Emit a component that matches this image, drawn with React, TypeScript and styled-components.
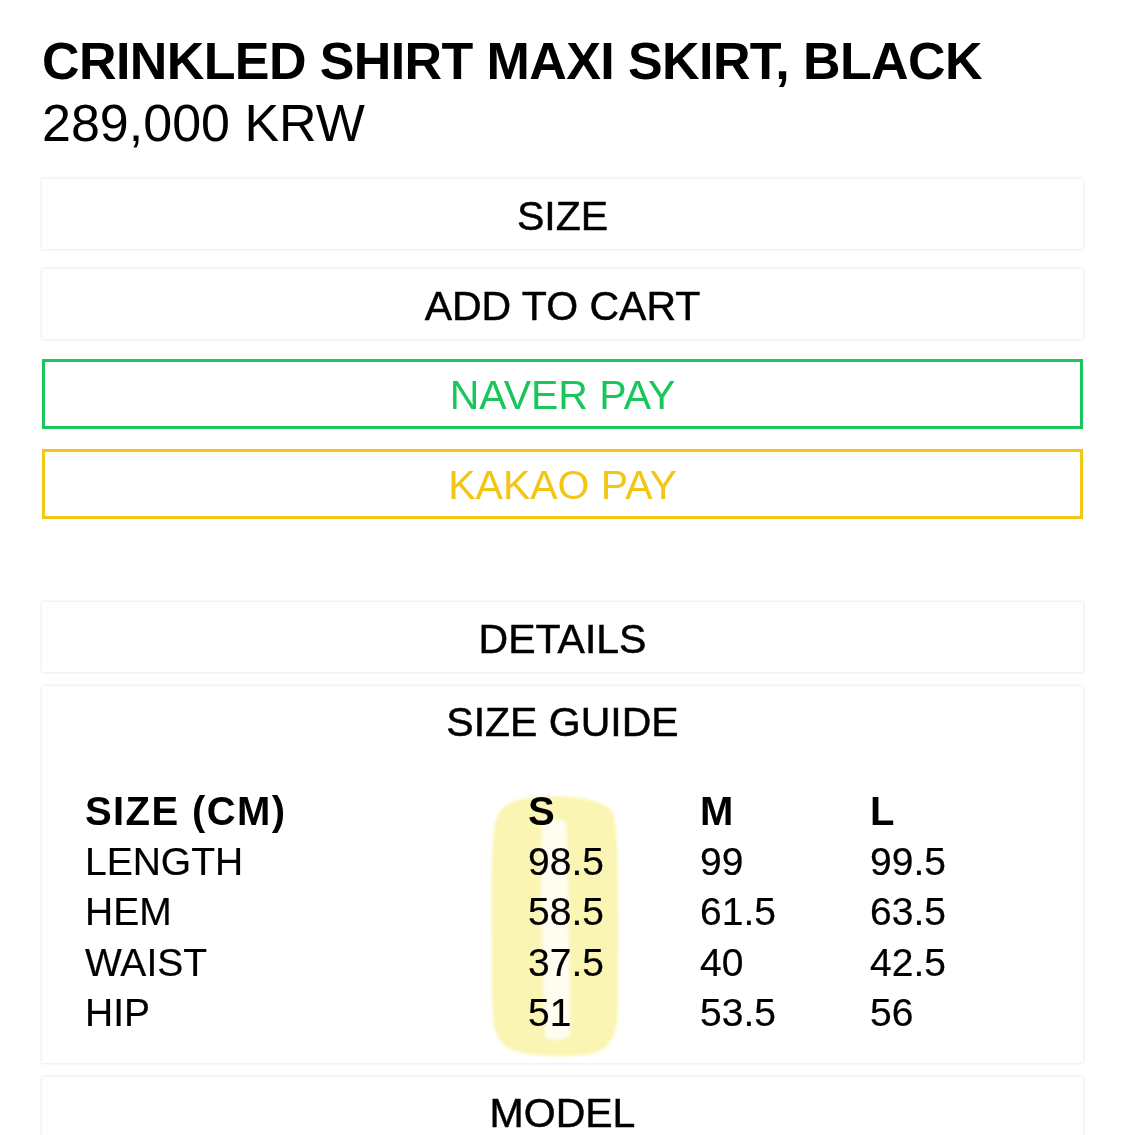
import React from "react";
import styled, { createGlobalStyle } from "styled-components";

const GlobalStyle = createGlobalStyle`
  body {
    margin: 0;
    background: #ffffff;
    font-family: "Liberation Sans", Arial, sans-serif;
    color: #000000;
  }
`;

const sizeRows = [
  { label: "LENGTH", s: "98.5", m: "99", l: "99.5" },
  { label: "HEM", s: "58.5", m: "61.5", l: "63.5" },
  { label: "WAIST", s: "37.5", m: "40", l: "42.5" },
  { label: "HIP", s: "51", m: "53.5", l: "56" },
];

const App: React.FC = () => {
  return (
    <>
      <GlobalStyle />
      <Page>
        <Header>
          <Title>CRINKLED SHIRT MAXI SKIRT, BLACK</Title>
          <Price>289,000 KRW</Price>
        </Header>

        <ButtonGroup>
          <Panel>SIZE</Panel>
          <Panel>ADD TO CART</Panel>
          <PayButton $color="#19c65a">NAVER PAY</PayButton>
          <PayButton $color="#f3c515">KAKAO PAY</PayButton>
        </ButtonGroup>

        <InfoGroup>
          <Panel>DETAILS</Panel>
          <GuideCard>
            <GuideTitle>SIZE GUIDE</GuideTitle>
            <SizeTable>
              <HeadCell>SIZE (CM)</HeadCell>
              <HeadCell>S</HeadCell>
              <HeadCell>M</HeadCell>
              <HeadCell>L</HeadCell>
              {sizeRows.map((row) => (
                <React.Fragment key={row.label}>
                  <Cell>{row.label}</Cell>
                  <Cell>{row.s}</Cell>
                  <Cell>{row.m}</Cell>
                  <Cell>{row.l}</Cell>
                </React.Fragment>
              ))}
            </SizeTable>
            <Highlight viewBox="0 0 132 262" aria-hidden="true">
              <defs>
                <filter id="soft" x="-10%" y="-10%" width="120%" height="120%">
                  <feGaussianBlur stdDeviation="1.8" />
                </filter>
              </defs>
              <g filter="url(#soft)">
                <path
                  d="M34 4 C70 -2 112 2 124 16 C132 30 130 120 130 210 C130 244 120 258 96 260 C70 262 40 262 22 254 C6 246 4 226 4 200 C4 130 2 70 6 34 C8 16 18 7 34 4 Z"
                  fill="#f6ec72"
                  opacity="0.55"
                />
                <path
                  d="M54 26 C62 24 72 24 78 27 C80 90 82 170 82 240 C74 246 62 246 57 242 C55 170 52 90 54 26 Z"
                  fill="#ffffff"
                  opacity="0.8"
                />
              </g>
            </Highlight>
          </GuideCard>
          <Panel>MODEL</Panel>
        </InfoGroup>
      </Page>
    </>
  );
};

const Page = styled.div`
  padding: 31px 42px 0;
  height: 1135px;
  box-sizing: border-box;
  overflow: hidden;
`;

const Header = styled.div`
  margin-bottom: 25px;
`;

const Title = styled.h1`
  margin: 0;
  font-size: 52px;
  line-height: 61px;
  font-weight: 700;
  letter-spacing: -0.6px;
`;

const Price = styled.p`
  margin: 0;
  font-size: 52px;
  line-height: 62px;
  font-weight: 400;
`;

const ButtonGroup = styled.div`
  display: flex;
  flex-direction: column;
  gap: 20px;
`;

const Panel = styled.div`
  height: 70px;
  flex-shrink: 0;
  display: flex;
  align-items: center;
  justify-content: center;
  background: #ffffff;
  box-shadow: 0 0 3px rgba(0, 0, 0, 0.14);
  font-size: 41px;
  line-height: 1;
  padding-top: 4px;
  box-sizing: border-box;
  -webkit-text-stroke: 0.5px currentColor;
`;

const PayButton = styled(Panel)<{ $color: string }>`
  box-shadow: none;
  border: 3px solid ${(p) => p.$color};
  color: ${(p) => p.$color};
  padding-top: 2px;
  -webkit-text-stroke: 0;
`;

const InfoGroup = styled.div`
  margin-top: 83px;
  display: flex;
  flex-direction: column;
  gap: 14px;
`;

const GuideCard = styled.div`
  position: relative;
  background: #ffffff;
  box-shadow: 0 0 3px rgba(0, 0, 0, 0.14);
  padding: 0 0 24px 43px;
`;

const GuideTitle = styled.div`
  height: 70px;
  display: flex;
  align-items: center;
  justify-content: center;
  margin-left: -43px;
  font-size: 41px;
  padding-top: 2px;
  box-sizing: border-box;
  -webkit-text-stroke: 0.5px currentColor;
`;

const SizeTable = styled.div`
  display: grid;
  grid-template-columns: 443px 172px 170px auto;
  padding-top: 30px;
  font-size: 39px;
  line-height: 50.5px;
`;

const HeadCell = styled.div`
  font-weight: 700;
  font-size: 40px;
  letter-spacing: 1.4px;
`;

const Cell = styled.div`
  font-weight: 400;
  -webkit-text-stroke: 0.2px currentColor;
`;

const Highlight = styled.svg`
  position: absolute;
  left: 446px;
  top: 109px;
  width: 132px;
  height: 262px;
  mix-blend-mode: multiply;
  pointer-events: none;
`;

export default App;
